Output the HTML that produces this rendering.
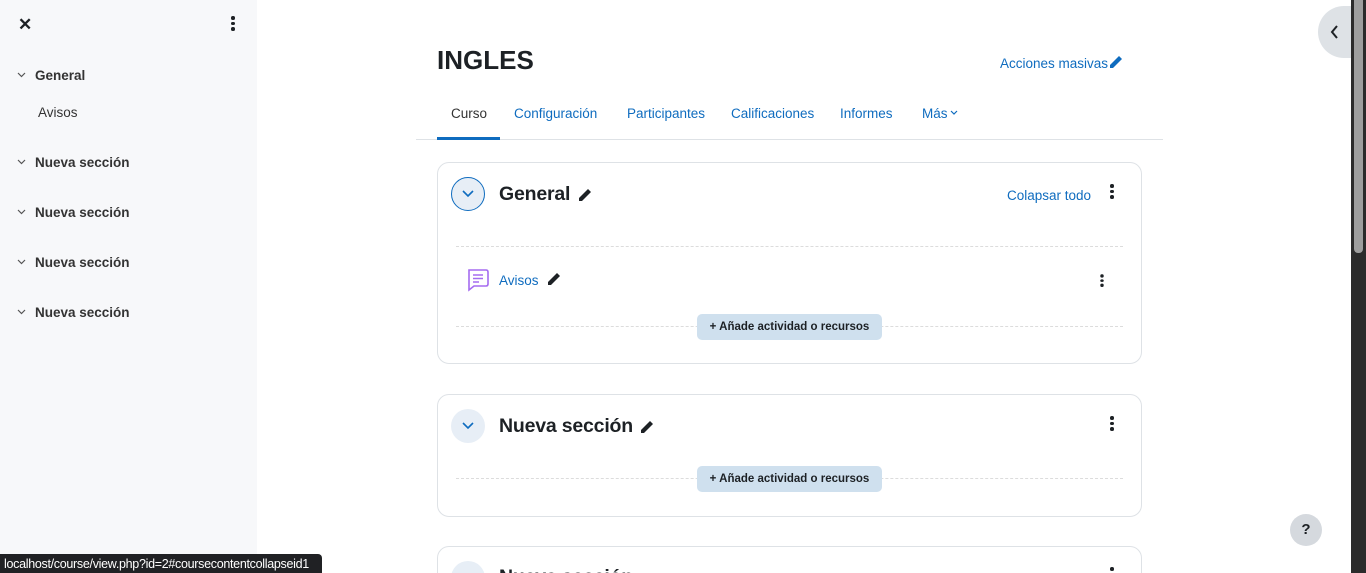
<!DOCTYPE html>
<html style="overflow:hidden;height:573px"><head><meta charset="utf-8"><style>
*{box-sizing:border-box;margin:0;padding:0}
html,body{width:1366px;height:573px;overflow:hidden}
body{background:#fff;font-family:"Liberation Sans",sans-serif;color:#1d2125}
#w{position:relative;width:1366px;height:573px;overflow:hidden}
.a{position:absolute;white-space:nowrap}
.side{left:0;top:0;width:257px;height:573px;background:#f7f8fa}
.sec{left:35px;font-size:13.5px;font-weight:bold;color:#333}
.chev{left:17px}
.blue{color:#0f6cbf}
.nav{top:106px;font-size:13.5px;color:#0f6cbf}
.card{border:1px solid #dee2e6;border-radius:12px;background:#fff}
.dash{border-top:1px dashed #dcdcdc;height:0}
.btn{background:#cfe0ee;border-radius:5px;font-size:11.5px;font-weight:bold;color:#1d2125;height:26px;line-height:26px;width:185px;text-align:center}
.kebab{width:4px}
.kebab i{display:block;width:3.5px;height:3.5px;border-radius:50%;background:#1d2125;margin-bottom:2px}
.circ{width:34px;height:34px;border-radius:50%;background:#e7eef6}
.h{font-size:19.5px;font-weight:bold;letter-spacing:-0.2px}
</style></head><body><div id="w">
<div class="a side"></div>
<div class="a" style="left:18px;top:15px;font-size:17px;font-weight:bold">✕</div>
<div class="a kebab" style="left:231px;top:16px"><i></i><i></i><i></i></div>
<svg class="a chev" style="top:72px" width="9" height="6"><path d="M1 1 L4.5 4.5 L8 1" stroke="#555" stroke-width="1.2" fill="none"/></svg>
<div class="a sec" style="top:68px">General</div>
<div class="a" style="left:38px;top:105px;font-size:13.5px;color:#333">Avisos</div>
<svg class="a chev" style="top:159px" width="9" height="6"><path d="M1 1 L4.5 4.5 L8 1" stroke="#555" stroke-width="1.2" fill="none"/></svg>
<div class="a sec" style="top:155px">Nueva sección</div>
<svg class="a chev" style="top:209px" width="9" height="6"><path d="M1 1 L4.5 4.5 L8 1" stroke="#555" stroke-width="1.2" fill="none"/></svg>
<div class="a sec" style="top:205px">Nueva sección</div>
<svg class="a chev" style="top:259px" width="9" height="6"><path d="M1 1 L4.5 4.5 L8 1" stroke="#555" stroke-width="1.2" fill="none"/></svg>
<div class="a sec" style="top:255px">Nueva sección</div>
<svg class="a chev" style="top:309px" width="9" height="6"><path d="M1 1 L4.5 4.5 L8 1" stroke="#555" stroke-width="1.2" fill="none"/></svg>
<div class="a sec" style="top:305px">Nueva sección</div>

<div class="a" style="left:437px;top:45px;font-size:26px;font-weight:bold">INGLES</div>
<div class="a blue" style="left:1000px;top:56px;font-size:13.5px">Acciones masivas</div>
<svg class="a" style="left:1108px;top:54px" width="16" height="16" viewBox="0 0 16 16"><path d="M2 11 L11 2 L14 5 L5 14 L2 14 Z" fill="#0f6cbf"/></svg>
<div class="a nav" style="left:451px;color:#333">Curso</div>
<div class="a nav" style="left:514px">Configuración</div>
<div class="a nav" style="left:627px">Participantes</div>
<div class="a nav" style="left:731px">Calificaciones</div>
<div class="a nav" style="left:840px">Informes</div>
<div class="a nav" style="left:922px">Más</div>
<svg class="a" style="left:950px;top:110px" width="8" height="6"><path d="M1 1 L4 4 L7 1" stroke="#0f6cbf" stroke-width="1.2" fill="none"/></svg>
<div class="a" style="left:416px;top:139px;width:747px;height:1px;background:#dee2e6"></div>
<div class="a" style="left:437px;top:137px;width:63px;height:3px;background:#0f6cbf"></div>

<div class="a card" style="left:437px;top:162px;width:705px;height:202px"></div>
<div class="a circ" style="left:451px;top:177px;border:1px solid #0f6cbf"></div>
<svg class="a" style="left:461px;top:189px" width="14" height="10"><path d="M2 2 L7 7 L12 2" stroke="#0f6cbf" stroke-width="1.6" fill="none"/></svg>
<div class="a h" style="left:499px;top:183px">General</div>
<svg class="a" style="left:577px;top:187px" width="16" height="16" viewBox="0 0 16 16"><path d="M2 11 L11 2 L14 5 L5 14 L2 14 Z" fill="#1d2125"/></svg>
<div class="a blue" style="left:1007px;top:188px;font-size:13.5px">Colapsar todo</div>
<div class="a kebab" style="left:1110px;top:184px"><i></i><i></i><i></i></div>
<div class="a dash" style="left:456px;top:246px;width:667px"></div>
<svg class="a" style="left:466px;top:268px" width="24" height="24" viewBox="0 0 24 24"><path d="M3 2 H20 Q22 2 22 4 V16 Q22 18 20 18 H8 L3 22 Z" fill="none" stroke="#a56cf0" stroke-width="1.6"/><path d="M7 7 H17 M7 10.5 H17 M7 14 H13" stroke="#a56cf0" stroke-width="1.4"/></svg>
<div class="a blue" style="left:499px;top:273px;font-size:13.5px">Avisos</div>
<svg class="a" style="left:546px;top:271px" width="16" height="16" viewBox="0 0 16 16"><path d="M2 11 L11 2 L14 5 L5 14 L2 14 Z" fill="#1d2125"/></svg>
<div class="a kebab" style="left:1100px;top:273px;transform:scale(.85)"><i></i><i></i><i></i></div>
<div class="a dash" style="left:456px;top:326px;width:667px"></div>
<div class="a btn" style="left:697px;top:314px">+ Añade actividad o recursos</div>

<div class="a card" style="left:437px;top:394px;width:705px;height:123px"></div>
<div class="a circ" style="left:451px;top:409px"></div>
<svg class="a" style="left:461px;top:421px" width="14" height="10"><path d="M2 2 L7 7 L12 2" stroke="#0f6cbf" stroke-width="1.6" fill="none"/></svg>
<div class="a h" style="left:499px;top:415px">Nueva sección</div>
<svg class="a" style="left:639px;top:419px" width="16" height="16" viewBox="0 0 16 16"><path d="M2 11 L11 2 L14 5 L5 14 L2 14 Z" fill="#1d2125"/></svg>
<div class="a kebab" style="left:1110px;top:416px"><i></i><i></i><i></i></div>
<div class="a dash" style="left:456px;top:478px;width:667px"></div>
<div class="a btn" style="left:697px;top:466px">+ Añade actividad o recursos</div>

<div class="a" style="left:437px;top:546px;width:705px;height:27px;overflow:hidden">
  <div class="a card" style="left:0;top:0;width:705px;height:60px"></div>
  <div class="a circ" style="left:14px;top:15px"></div>
  <div class="a h" style="left:62px;top:20px">Nueva sección</div>
  <div class="a kebab" style="left:673px;top:21px"><i></i><i></i><i></i></div>
</div>

<div class="a" style="left:1318px;top:6px;width:48px;height:52px;border-radius:26px 0 0 26px;background:#dee2e6"></div>
<svg class="a" style="left:1329px;top:24px" width="12" height="16"><path d="M8 2 L3 8 L8 14" stroke="#1d2125" stroke-width="2" fill="none"/></svg>
<div class="a" style="left:1290px;top:514px;width:32px;height:32px;border-radius:50%;background:#d5d9de;text-align:center;line-height:32px;font-size:15px;font-weight:bold">?</div>
<div class="a" style="left:1351px;top:0;width:15px;height:573px;background:#2b2b2b"></div>
<div class="a" style="left:1354px;top:0;width:9px;height:253px;border-radius:0 0 4px 4px;background:#9e9e9e"></div>

<div class="a" style="left:0;top:554px;width:322px;height:19px;background:#202124;border-radius:0 4px 0 0;color:#fff;font-size:12.5px;line-height:20px;padding-left:4px;letter-spacing:-0.3px;overflow:hidden">localhost/course/view.php?id=2#coursecontentcollapseid1</div>
</div></body></html>
